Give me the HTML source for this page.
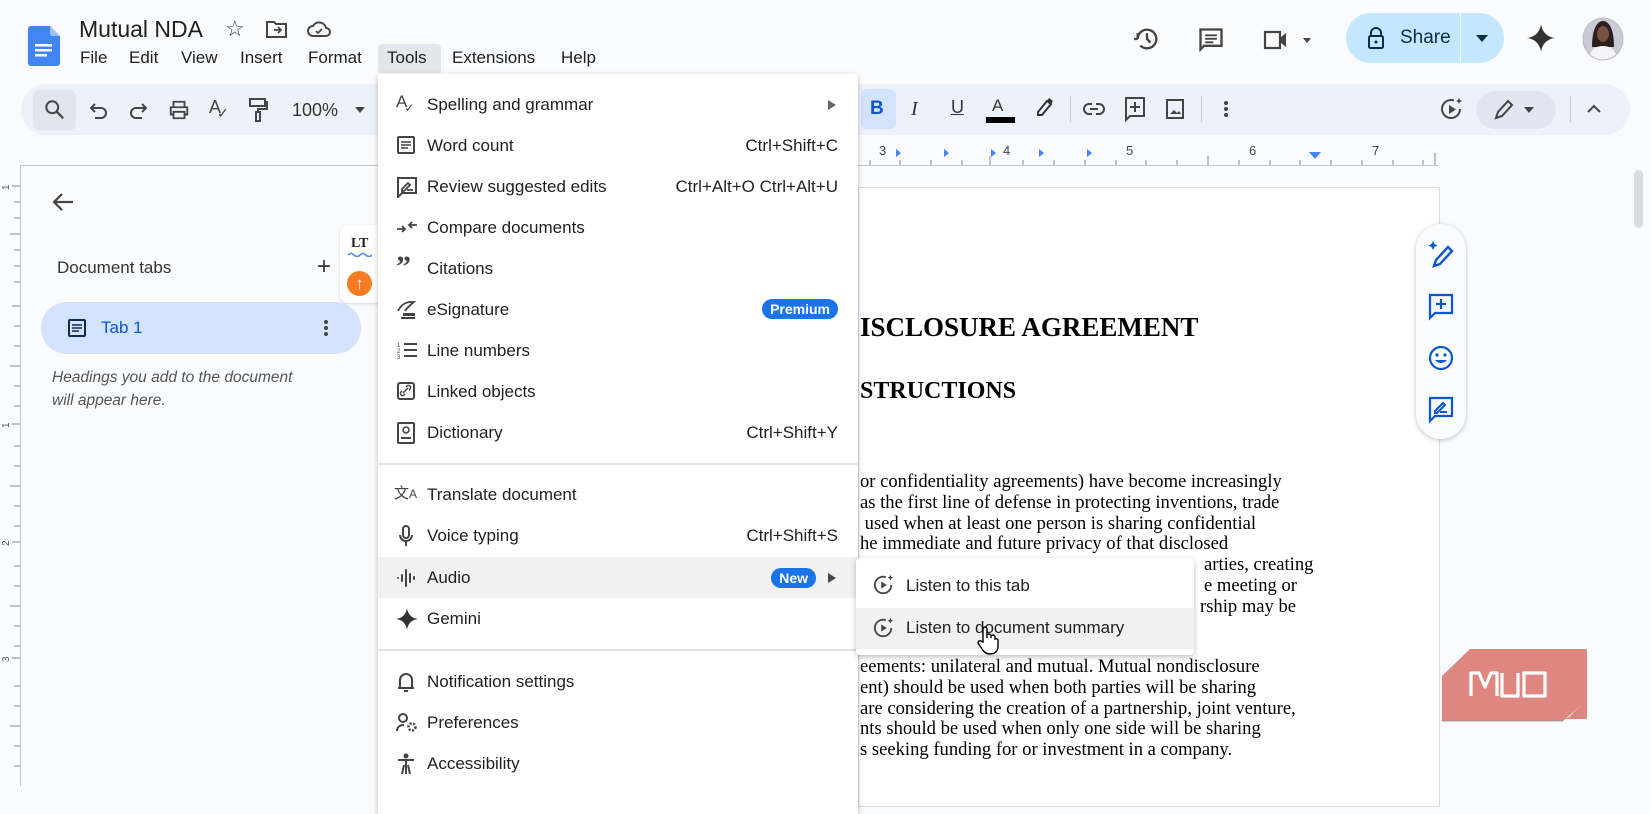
<!DOCTYPE html>
<html><head><meta charset="utf-8"><style>
*{box-sizing:border-box;margin:0;padding:0}
body{width:1650px;height:786px;overflow:hidden;background:#f9fbfd;font-family:"Liberation Sans",Arial,sans-serif;color:#1f1f1f;position:relative}
.a{position:absolute}
svg{display:block}
.mi{position:absolute;left:0;width:480px;height:41px;font-size:17px;color:#1f1f1f}
.mi .t{position:absolute;left:49px;top:11px}
.mi .k{position:absolute;right:20px;top:11px;color:#1f1f1f}
.mi svg{position:absolute;left:18px;top:10px}
.body{font-family:"Liberation Serif",serif;font-size:18.6px;color:#000;white-space:nowrap}
</style></head><body>
<!-- header -->
<svg class="a" style="left:28px;top:26px" width="32" height="40" viewBox="0 0 32 40"><path d="M3 0h19l10 10v27a3 3 0 0 1-3 3H3a3 3 0 0 1-3-3V3a3 3 0 0 1 3-3z" fill="#4285f4"/><path d="M22 0l10 10H24a2 2 0 0 1-2-2z" fill="#a1c2fa"/><rect x="7" y="18" width="17" height="2.5" fill="#fff"/><rect x="7" y="23" width="17" height="2.5" fill="#fff"/><rect x="7" y="28" width="12" height="2.5" fill="#fff"/></svg>
<div class="a" style="left:79px;top:16px;font-size:23px">Mutual NDA</div>
<div class="a" style="left:225px;top:16px;font-size:22px;color:#444">☆</div>
<svg class="a" style="left:266px;top:20px" width="22" height="18" viewBox="0 0 22 18"><path d="M1 2h7l2 2h10v13H1z" fill="none" stroke="#444" stroke-width="2"/><path d="M8 10h7M12 7l3 3-3 3" fill="none" stroke="#444" stroke-width="1.8"/></svg>
<svg class="a" style="left:307px;top:20px" width="24" height="18" viewBox="0 0 24 18"><path d="M6 16a5 5 0 0 1 0-10 7 7 0 0 1 13 2 4 4 0 0 1 0 8z" fill="none" stroke="#444" stroke-width="2"/><path d="M9 11l2 2 4-4" fill="none" stroke="#444" stroke-width="1.8"/></svg>
<div class="a" style="left:378px;top:44px;width:63px;height:29px;background:#e3e6ea;border-radius:4px 4px 0 0"></div>
<div class="a" style="top:48px;left:80px;font-size:17px;word-spacing:0">
<span style="position:absolute;left:0">File</span><span style="position:absolute;left:49px">Edit</span><span style="position:absolute;left:101px">View</span><span style="position:absolute;left:160px">Insert</span><span style="position:absolute;left:228px">Format</span><span style="position:absolute;left:307px">Tools</span><span style="position:absolute;left:372px">Extensions</span><span style="position:absolute;left:481px">Help</span></div>
<!-- top right -->
<svg class="a" style="left:1133px;top:25px" width="28" height="28" viewBox="0 0 24 24"><path d="M4 12a8 8 0 1 1 2.3 5.6M4 12V7M4 12H1" fill="none" stroke="#444" stroke-width="2"/><path d="M12 7v5l3 3" fill="none" stroke="#444" stroke-width="2"/></svg>
<svg class="a" style="left:1197px;top:26px" width="28" height="28" viewBox="0 0 24 24"><path d="M3 3h18v14H6l-3 3z" fill="none" stroke="#444" stroke-width="2"/><path d="M7 8h10M7 11h10M7 14h7" stroke="#444" stroke-width="1.6"/></svg>
<svg class="a" style="left:1263px;top:28px" width="48" height="24" viewBox="0 0 48 24"><path d="M2 4h15v16H2z" fill="none" stroke="#444" stroke-width="2.2"/><path d="M17 10l6-5v14l-6-5z" fill="#444"/><path d="M40 10h8l-4 5z" fill="#444"/></svg>
<div class="a" style="left:1346px;top:13px;width:158px;height:50px;background:#c2e7ff;border-radius:25px"></div>
<div class="a" style="left:1460px;top:13px;width:1px;height:50px;background:#fff"></div>
<svg class="a" style="left:1367px;top:26px" width="18" height="24" viewBox="0 0 18 24"><path d="M4 10V7a5 5 0 0 1 10 0v3" fill="none" stroke="#0b2b4a" stroke-width="2"/><rect x="2" y="10" width="14" height="12" rx="1.5" fill="none" stroke="#0b2b4a" stroke-width="2"/><circle cx="9" cy="16" r="1.5" fill="#0b2b4a"/></svg>
<div class="a" style="left:1400px;top:27px;font-size:19px;color:#0b2b4a">Share</div>
<svg class="a" style="left:1476px;top:35px" width="12" height="7"><path d="M0 0h12L6 7z" fill="#0b2b4a"/></svg>
<svg class="a" style="left:1527px;top:24px" width="28" height="28" viewBox="0 0 28 28"><path d="M14 0C15 8 20 13 28 14 20 15 15 20 14 28 13 20 8 15 0 14 8 13 13 8 14 0z" fill="#333"/></svg>
<svg class="a" style="left:1582px;top:17px" width="42" height="44" viewBox="0 0 42 44"><defs><clipPath id="c"><ellipse cx="21" cy="22" rx="20" ry="21"/></clipPath></defs><g clip-path="url(#c)"><rect width="42" height="44" fill="#c9ccd6"/><path d="M10 30c0-20 6-26 11-26s11 6 11 26z" fill="#2a1e1e"/><ellipse cx="21" cy="17" rx="6" ry="8" fill="#7a5040"/><path d="M6 44c2-12 8-15 15-15s13 3 15 15z" fill="#f4f4f6"/></g><ellipse cx="21" cy="22" rx="20" ry="21" fill="none" stroke="#bbb"/></svg>
<!-- toolbar -->
<div class="a" style="left:21px;top:84px;width:1609px;height:51px;background:#edf2fa;border-radius:26px"></div>
<div class="a" style="left:33px;top:90px;width:43px;height:40px;background:#e1e6ee;border-radius:6px"></div>
<svg class="a" style="left:44px;top:99px" width="22" height="22" viewBox="0 0 24 24"><circle cx="9" cy="9" r="6.5" fill="none" stroke="#444" stroke-width="2.2"/><path d="M14 14l7 7" stroke="#444" stroke-width="2.4"/></svg>
<svg class="a" style="left:89px;top:101px" width="20" height="18" viewBox="0 0 20 18"><path d="M6 3L2 7l4 4M2 7h10a5 5 0 0 1 0 10H6" fill="none" stroke="#444" stroke-width="2"/></svg>
<svg class="a" style="left:128px;top:101px" width="20" height="18" viewBox="0 0 20 18"><path d="M14 3l4 4-4 4M18 7H8a5 5 0 0 0 0 10h6" fill="none" stroke="#444" stroke-width="2"/></svg>
<svg class="a" style="left:168px;top:99px" width="22" height="22" viewBox="0 0 24 24"><path d="M6 8V3h12v5M6 17H3V9h18v8h-3M6 14h12v7H6z" fill="none" stroke="#444" stroke-width="2"/></svg>
<div class="a" style="left:209px;top:97px;font-size:18px;color:#444">A<span style="font-size:14px;position:relative;left:-4px;top:5px">✓</span></div>
<svg class="a" style="left:248px;top:97px" width="20" height="26" viewBox="0 0 20 26"><rect x="2" y="2" width="15" height="7" fill="none" stroke="#444" stroke-width="2"/><path d="M17 5h2v7h-9v3" fill="none" stroke="#444" stroke-width="2"/><rect x="8" y="15" width="4" height="9" fill="none" stroke="#444" stroke-width="2"/></svg>
<div class="a" style="left:292px;top:100px;font-size:18px;color:#333">100%</div>
<svg class="a" style="left:355px;top:107px" width="10" height="6"><path d="M0 0h10L5 6z" fill="#444"/></svg>
<div class="a" style="left:861px;top:89px;width:35px;height:40px;background:#d3e3fd;border-radius:6px"></div>
<div class="a" style="left:870px;top:98px;font-size:19px;font-weight:bold;color:#0b57d0">B</div>
<div class="a" style="left:911px;top:98px;font-size:20px;font-style:italic;font-family:'Liberation Serif',serif;color:#333">I</div>
<div class="a" style="left:951px;top:97px;font-size:18px;text-decoration:underline;color:#333">U</div>
<div class="a" style="left:992px;top:96px;font-size:17px;color:#333">A</div>
<div class="a" style="left:986px;top:117px;width:29px;height:6px;background:#000"></div>
<svg class="a" style="left:1033px;top:96px" width="22" height="22" viewBox="0 0 22 22"><path d="M5 16l9-11 4 3-9 11H5z" fill="none" stroke="#333" stroke-width="2"/><path d="M14 5l2-3 4 3-2 3" fill="#333"/></svg>
<div class="a" style="left:1070px;top:96px;width:1px;height:26px;background:#c7c7c7"></div>
<svg class="a" style="left:1083px;top:101px" width="22" height="16" viewBox="0 0 22 16"><path d="M9 3H6a5 5 0 0 0 0 10h3M13 3h3a5 5 0 0 1 0 10h-3M7 8h8" fill="none" stroke="#444" stroke-width="2"/></svg>
<svg class="a" style="left:1124px;top:96px" width="22" height="26" viewBox="0 0 22 26"><path d="M2 2h18v18H6l-4 4z" fill="none" stroke="#444" stroke-width="2"/><path d="M11 6v10M6 11h10" stroke="#444" stroke-width="2"/></svg>
<svg class="a" style="left:1165px;top:98px" width="20" height="22" viewBox="0 0 20 22"><rect x="2" y="2" width="16" height="18" fill="none" stroke="#444" stroke-width="2"/><path d="M5 16l4-4 3 3 2-2 2 3z" fill="#444"/></svg>
<div class="a" style="left:1201px;top:96px;width:1px;height:26px;background:#c7c7c7"></div>
<svg class="a" style="left:1223px;top:100px" width="6" height="18"><circle cx="3" cy="3" r="2" fill="#444"/><circle cx="3" cy="9" r="2" fill="#444"/><circle cx="3" cy="15" r="2" fill="#444"/></svg>
<svg class="a" style="left:1440px;top:97px" width="24" height="26" viewBox="0 0 24 26"><path d="M20 12a9 9 0 1 1-6-8.5" fill="none" stroke="#444" stroke-width="2"/><path d="M9 8v9l7-4.5z" fill="#444"/><path d="M19 1l1 2 2 1-2 1-1 2-1-2-2-1 2-1z" fill="#444"/></svg>
<div class="a" style="left:1476px;top:91px;width:80px;height:38px;background:#e1e7f0;border-radius:19px"></div>
<svg class="a" style="left:1492px;top:98px" width="22" height="24" viewBox="0 0 22 24"><path d="M4 20l2-6 10-11 4 4-10 11z" fill="none" stroke="#444" stroke-width="2"/></svg>
<svg class="a" style="left:1524px;top:107px" width="10" height="6"><path d="M0 0h10L5 6z" fill="#444"/></svg>
<div class="a" style="left:1570px;top:96px;width:1px;height:26px;background:#c7c7c7"></div>
<svg class="a" style="left:1587px;top:104px" width="14" height="9"><path d="M1 8l6-6 6 6" fill="none" stroke="#444" stroke-width="2"/></svg>
<!-- ruler top -->
<div class="a" style="left:858px;top:165px;width:580px;height:1px;background:#c4c7cc"></div>
<div class="a" style="left:860px;top:143px;width:580px;height:22px;font-size:13px;color:#444">
<span class="a" style="left:19px;top:0">3</span><span class="a" style="left:143px;top:0">4</span><span class="a" style="left:266px;top:0">5</span><span class="a" style="left:389px;top:0">6</span><span class="a" style="left:512px;top:0">7</span>
<svg class="a" style="left:0;top:0" width="580" height="22"><g fill="#4285f4"><path d="M36 6l5 4-5 4z"/><path d="M84 6l5 4-5 4z"/><path d="M131 6l5 4-5 4z"/><path d="M179 6l5 4-5 4z"/><path d="M227 6l5 4-5 4z"/><path d="M449 9h12l-6 7z"/></g><g stroke="#888" stroke-width="1"><path d="M10 17v5M40 17v5M71 17v5M102 17v5M130 13v9M163 17v5M194 17v5M225 17v5M256 17v5M286 17v5M317 17v5M348 13v9M379 17v5M410 17v5M440 17v5M471 17v5M502 17v5M533 17v5M563 17v5M575 10v12"/></g></svg></div>
<!-- left ruler & sidebar -->
<div class="a" style="left:0;top:166px;width:20px;height:620px">
<svg width="20" height="620"><g stroke="#888"><path d="M12 20h8M14 36h6M14 52h6M10 68h10M14 84h6M14 100h6M14 116h6M12 140h8M14 160h6M14 180h6M10 200h10M14 220h6M14 240h6M12 258h8M14 280h6M14 300h6M10 320h10M14 340h6M14 360h6M12 376h8M14 400h6M14 420h6M10 440h10M14 460h6M14 480h6M12 492h8M14 520h6M14 540h6M10 560h10M14 580h6M14 600h6"/></g><g font-size="10" fill="#555" font-family="Liberation Sans"><text x="1" y="24" transform="rotate(-90 5 20)">1</text><text x="1" y="262" transform="rotate(-90 5 258)">1</text><text x="1" y="380" transform="rotate(-90 5 376)">2</text><text x="1" y="496" transform="rotate(-90 5 492)">3</text></g></svg></div>
<div class="a" style="left:20px;top:165px;width:360px;height:621px;border-left:1px solid #c4c7cc;border-top:1px solid #c4c7cc;background:#f9fbfd"></div>
<svg class="a" style="left:52px;top:192px" width="22" height="20" viewBox="0 0 22 20"><path d="M10 2L2 10l8 8M2 10h19" fill="none" stroke="#444" stroke-width="2.2"/></svg>
<div class="a" style="left:57px;top:258px;font-size:17px;color:#333">Document tabs</div>
<div class="a" style="left:317px;top:253px;font-size:24px;color:#333">+</div>
<div class="a" style="left:41px;top:302px;width:320px;height:52px;background:#d3e3fd;border-radius:26px"></div>
<svg class="a" style="left:68px;top:319px" width="18" height="18" viewBox="0 0 18 18"><rect x="1" y="1" width="16" height="16" rx="1" fill="none" stroke="#0b2b4a" stroke-width="2"/><path d="M4 6h10M4 9h10M4 12h7" stroke="#0b2b4a" stroke-width="1.6"/></svg>
<div class="a" style="left:101px;top:318px;font-size:17px;color:#0b57d0">Tab 1</div>
<svg class="a" style="left:323px;top:319px" width="6" height="18"><circle cx="3" cy="3" r="2" fill="#444"/><circle cx="3" cy="9" r="2" fill="#444"/><circle cx="3" cy="15" r="2" fill="#444"/></svg>
<div class="a" style="left:52px;top:366px;font-size:15.5px;font-style:italic;color:#555;line-height:23px">Headings you add to the document<br>will appear here.</div>
<div class="a" style="left:340px;top:225px;width:40px;height:78px;background:#fff;border-radius:8px 0 0 8px;box-shadow:0 1px 3px rgba(0,0,0,.15)"></div>
<div class="a" style="left:351px;top:236px;font-size:14px;font-weight:bold;font-family:'Liberation Serif',serif">LT</div>
<svg class="a" style="left:348px;top:252px" width="24" height="5"><path d="M0 3q3-3 6 0t6 0 6 0 6 0" fill="none" stroke="#4a8ff0" stroke-width="1.6"/></svg>
<div class="a" style="left:347px;top:271px;width:25px;height:25px;border-radius:50%;background:#f57c22;color:#fff;font-size:17px;font-weight:bold;text-align:center;line-height:25px">↑</div>
<!-- page -->
<div class="a" style="left:858px;top:187px;width:582px;height:620px;background:#fff;border:1px solid #dadce0"></div>
<div class="a" style="left:860px;top:312px;font-family:'Liberation Serif',serif;font-weight:bold;font-size:27px;color:#000">ISCLOSURE AGREEMENT</div>
<div class="a" style="left:860px;top:378px;font-family:'Liberation Serif',serif;font-weight:bold;font-size:24px;color:#000">STRUCTIONS</div>
<div class="a body" style="left:860px;top:472px;line-height:20.8px">
or confidentiality agreements) have become increasingly<br>
as the first line of defense in protecting inventions, trade<br>
&nbsp;used when at least one person is sharing confidential<br>
he immediate and future privacy of that disclosed<br>
<span style="padding-left:344px">arties, creating</span><br>
<span style="padding-left:344px">e meeting or</span><br>
<span style="padding-left:340px">rship may be</span></div>
<div class="a body" style="left:860px;top:657px;line-height:20.8px">
eements: unilateral and mutual. Mutual nondisclosure<br>
ent) should be used when both parties will be sharing<br>
are considering the creation of a partnership, joint venture,<br>
nts should be used when only one side will be sharing<br>
s seeking funding for or investment in a company.</div>
<!-- right float -->
<div class="a" style="left:1416px;top:224px;width:50px;height:215px;background:#f9fbfd;border-radius:25px;box-shadow:0 1px 4px rgba(0,0,0,.25)"></div>
<svg class="a" style="left:1428px;top:240px" width="26" height="28" viewBox="0 0 26 28"><path d="M6 26l2-6 12-13 4 4-12 13z" fill="none" stroke="#0b57d0" stroke-width="2.4"/><path d="M5 1l1.5 3 3 1.5-3 1.5L5 10 3.5 7 .5 5.5l3-1.5z" fill="#0b57d0"/></svg>
<svg class="a" style="left:1428px;top:293px" width="26" height="28" viewBox="0 0 26 28"><path d="M2 2h22v18H7l-5 5z" fill="none" stroke="#0b57d0" stroke-width="2.2"/><path d="M13 6v10M8 11h10" stroke="#0b57d0" stroke-width="2.2"/></svg>
<svg class="a" style="left:1428px;top:345px" width="26" height="26" viewBox="0 0 26 26"><circle cx="13" cy="13" r="11" fill="none" stroke="#0b57d0" stroke-width="2.2"/><circle cx="9" cy="10" r="1.6" fill="#0b57d0"/><circle cx="17" cy="10" r="1.6" fill="#0b57d0"/><path d="M7 15q6 6 12 0z" fill="#0b57d0"/></svg>
<svg class="a" style="left:1428px;top:396px" width="26" height="28" viewBox="0 0 26 28"><path d="M2 2h22v18H7l-5 5z" fill="none" stroke="#0b57d0" stroke-width="2.2"/><path d="M7 15l8-8 2 2-8 8H7zM12 16h7" stroke="#0b57d0" stroke-width="2" fill="none"/></svg>
<!-- scrollbar -->
<div class="a" style="left:1634px;top:170px;width:9px;height:58px;background:#dadce0;border-radius:5px"></div>
<!-- MUO -->
<svg class="a" style="left:1440px;top:648px" width="150" height="76" viewBox="0 0 150 76"><path d="M30 1h117v51l-24 21H2V28z" fill="#de8780"/><path d="M129 69l18-18v20h-22z" fill="#de8780"/><path d="M2 73h121" stroke="#999" stroke-width="1.5" opacity=".6"/><g fill="none" stroke="#fff" stroke-width="3.2" stroke-linejoin="round"><path d="M31 48V25h8l6 14 6-14h6v23"/><path d="M62 25v23h16V25"/><path d="M84 25h21v23H84z"/></g></svg>
<!-- Tools menu -->
<div class="a" style="left:378px;top:74px;width:480px;height:740px;background:#fff;box-shadow:0 2px 6px rgba(0,0,0,.25);border-radius:0 4px 0 0">
<div class="mi" style="top:10px"><div class="t">Spelling and grammar</div><svg style="left:450px;top:16px" width="8" height="10"><path d="M0 0l8 5-8 5z" fill="#666"/></svg><div style="position:absolute;left:18px;top:8px;font-size:17px;color:#444">A<span style="font-size:12px;position:relative;left:-3px;top:5px">✓</span></div></div>
<div class="mi" style="top:51px"><svg width="20" height="20" viewBox="0 0 20 20"><rect x="2" y="2" width="16" height="16" rx="1" fill="none" stroke="#444" stroke-width="2"/><path d="M5 7h10M5 10h10M5 13h7" stroke="#444" stroke-width="1.6"/></svg><div class="t">Word count</div><div class="k">Ctrl+Shift+C</div></div>
<div class="mi" style="top:92px"><svg width="22" height="22" viewBox="0 0 22 22"><path d="M2 2h18v15H6l-4 4z" fill="none" stroke="#444" stroke-width="2"/><path d="M6 13l6-6 2 2-6 6H6zM11 14h6" stroke="#444" stroke-width="1.8" fill="none"/></svg><div class="t">Review suggested edits</div><div class="k">Ctrl+Alt+O Ctrl+Alt+U</div></div>
<div class="mi" style="top:133px"><svg width="22" height="20" viewBox="0 0 22 20"><path d="M1 12h8M6 9l3 3-3 3M21 8h-8M16 5l-3 3 3 3" fill="none" stroke="#444" stroke-width="1.8"/></svg><div class="t">Compare documents</div></div>
<div class="mi" style="top:174px"><div style="position:absolute;left:18px;top:2px;font-size:30px;font-weight:bold;color:#444;font-family:'Liberation Serif',serif">”</div><div class="t">Citations</div></div>
<div class="mi" style="top:215px"><svg width="22" height="22" viewBox="0 0 22 22"><path d="M2 12c3-6 8-10 16-9-4 3-7 6-9 9" fill="none" stroke="#444" stroke-width="1.8"/><rect x="7" y="14" width="12" height="3" fill="#444"/><rect x="5" y="18" width="14" height="2" fill="#444"/></svg><div class="t">eSignature</div><div style="position:absolute;right:20px;top:10px;background:#1a73e8;color:#fff;font-size:14px;font-weight:bold;padding:2px 8px;border-radius:10px">Premium</div></div>
<div class="mi" style="top:256px"><svg width="22" height="20" viewBox="0 0 22 20"><path d="M8 4h13M8 10h13M8 16h13" stroke="#444" stroke-width="2"/><text x="1" y="7" font-size="6" fill="#444">1</text><text x="1" y="13" font-size="6" fill="#444">2</text><text x="1" y="19" font-size="6" fill="#444">3</text></svg><div class="t">Line numbers</div></div>
<div class="mi" style="top:297px"><svg width="20" height="20" viewBox="0 0 20 20"><rect x="2" y="2" width="16" height="16" rx="2" fill="none" stroke="#444" stroke-width="2"/><path d="M7 12l5-5M6 10l-1 1a2 2 0 0 0 3 3l1-1M13 9l1-1a2 2 0 0 0-3-3l-1 1" fill="none" stroke="#444" stroke-width="1.5"/></svg><div class="t">Linked objects</div></div>
<div class="mi" style="top:338px"><svg width="20" height="22" viewBox="0 0 20 22"><rect x="2" y="1" width="16" height="20" rx="1" fill="none" stroke="#444" stroke-width="2"/><circle cx="10" cy="8" r="3" fill="none" stroke="#444" stroke-width="1.6"/><path d="M5 16h10" stroke="#444" stroke-width="2"/></svg><div class="t">Dictionary</div><div class="k">Ctrl+Shift+Y</div></div>
<div style="position:absolute;left:0;top:389px;width:480px;height:2px;background:#e5e5e5"></div>
<div class="mi" style="top:400px"><div style="position:absolute;left:16px;top:8px;font-size:15px;color:#444">文<span style="font-size:12px">A</span></div><div class="t">Translate document</div></div>
<div class="mi" style="top:441px"><svg width="20" height="22" viewBox="0 0 20 22"><rect x="7" y="1" width="6" height="12" rx="3" fill="none" stroke="#444" stroke-width="2"/><path d="M4 10a6 6 0 0 0 12 0M10 16v5" fill="none" stroke="#444" stroke-width="2"/></svg><div class="t">Voice typing</div><div class="k">Ctrl+Shift+S</div></div>
<div class="mi" style="top:483px;background:#f1f1f1"><svg width="22" height="22" viewBox="0 0 22 22"><path d="M2 11v0M6 8v6M10 3v16M14 7v8M18 10v2" stroke="#444" stroke-width="2" stroke-linecap="round"/></svg><div class="t">Audio</div><div style="position:absolute;right:42px;top:11px;background:#1a73e8;color:#fff;font-size:14px;font-weight:bold;padding:2px 8px;border-radius:10px">New</div><svg style="left:450px;top:16px" width="8" height="10"><path d="M0 0l8 5-8 5z" fill="#444"/></svg></div>
<div class="mi" style="top:524px"><svg width="22" height="22" viewBox="0 0 28 28"><path d="M14 0C15 8 20 13 28 14 20 15 15 20 14 28 13 20 8 15 0 14 8 13 13 8 14 0z" fill="#333"/></svg><div class="t">Gemini</div></div>
<div style="position:absolute;left:0;top:575px;width:480px;height:2px;background:#e5e5e5"></div>
<div class="mi" style="top:587px"><svg width="20" height="22" viewBox="0 0 20 22"><path d="M4 17V9a6 6 0 0 1 12 0v8zM2 17h16M8 20h4" fill="none" stroke="#444" stroke-width="2"/></svg><div class="t">Notification settings</div></div>
<div class="mi" style="top:628px"><svg width="24" height="22" viewBox="0 0 24 22"><circle cx="7" cy="6" r="4" fill="none" stroke="#444" stroke-width="2"/><path d="M1 19c0-4 3-6 7-6" fill="none" stroke="#444" stroke-width="2"/><circle cx="16" cy="15" r="3.5" fill="none" stroke="#444" stroke-width="2.5" stroke-dasharray="2 1.5"/></svg><div class="t">Preferences</div></div>
<div class="mi" style="top:669px"><svg width="20" height="22" viewBox="0 0 20 22"><circle cx="10" cy="3" r="2.5" fill="#444"/><path d="M2 7h16M10 7v14M6 21l2-9M14 21l-2-9" stroke="#444" stroke-width="2" fill="none"/></svg><div class="t">Accessibility</div></div>
</div>
<!-- submenu -->
<div class="a" style="left:856px;top:558px;width:338px;height:97px;background:#fff;box-shadow:0 2px 6px rgba(0,0,0,.25);border-radius:4px">
<svg class="a" style="left:17px;top:16px" width="22" height="22" viewBox="0 0 24 24"><path d="M20 12a9 9 0 1 1-6-8.5" fill="none" stroke="#444" stroke-width="2"/><path d="M9 8v8l6-4z" fill="#444"/><path d="M19 1l1 2 2 1-2 1-1 2-1-2-2-1 2-1z" fill="#444"/></svg>
<div class="a" style="left:50px;top:18px;font-size:17px">Listen to this tab</div>
<div class="a" style="left:0;top:50px;width:338px;height:41px;background:#f1f1f1"></div>
<svg class="a" style="left:17px;top:59px" width="22" height="22" viewBox="0 0 24 24"><path d="M20 12a9 9 0 1 1-6-8.5" fill="none" stroke="#444" stroke-width="2"/><path d="M9 8v8l6-4z" fill="#444"/><path d="M19 1l1 2 2 1-2 1-1 2-1-2-2-1 2-1z" fill="#444"/></svg>
<div class="a" style="left:50px;top:60px;font-size:17px">Listen to document summary</div>
<svg class="a" style="left:121px;top:68px" width="22" height="30" viewBox="0 0 22 30"><path d="M6 16V3a2 2 0 0 1 4 0v9-2a2 2 0 0 1 4 0v2-1a2 2 0 0 1 4 0v2a2 2 0 0 1 3 1v6c0 5-3 8-8 8-4 0-6-2-8-5l-4-6a2 2 0 0 1 3-2z" fill="#fff" stroke="#000" stroke-width="1.4"/></svg>
</div>
</body></html>
